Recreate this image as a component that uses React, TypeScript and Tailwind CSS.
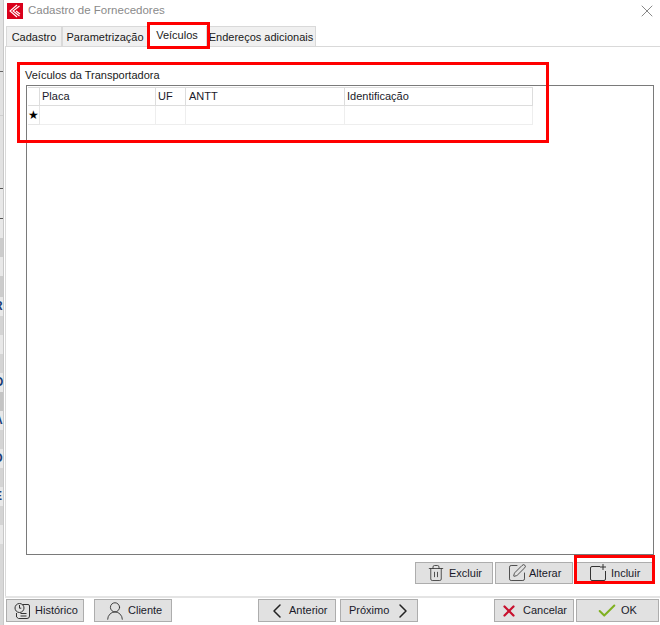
import type { ReactNode } from "react";
import { Check, ChevronLeft, ChevronRight, SquarePen, Trash2, UserRound, X } from "lucide-react";

const tabs = [
  { label: "Cadastro", width: "w-[56px]" },
  { label: "Parametrização", width: "w-[86px]" },
  { label: "Veículos", width: "w-[58px]" },
  { label: "Endereços adicionais", width: "w-[110px]" },
];

// background window that peeks out at the left of the dialog
const strip = [
  { h: "h-[71px]", bg: "bg-[#e2e2e2]", text: "" },
  { h: "h-[1px]", bg: "bg-[#666666]", text: "" },
  { h: "h-[43px]", bg: "bg-[#e2e2e2]", text: "" },
  { h: "h-[1px]", bg: "bg-[#cfcfcf]", text: "" },
  { h: "h-[72px]", bg: "bg-[#e2e2e2]", text: "" },
  { h: "h-[1px]", bg: "bg-[#555555]", text: "" },
  { h: "h-[29px]", bg: "bg-[#e8e8e8]", text: "" },
  { h: "h-[1px]", bg: "bg-[#555555]", text: "" },
  { h: "h-[19px]", bg: "bg-[#e8e8e8]", text: "" },
  { h: "h-[19px]", bg: "bg-[#cccccc]", text: "" },
  { h: "h-[19px]", bg: "bg-[#e8e8e8]", text: "" },
  { h: "h-[21px]", bg: "bg-[#cccccc]", text: "" },
  { h: "h-[19px]", bg: "bg-[#e8e8e8]", text: "R" },
  { h: "h-[19px]", bg: "bg-[#d4d4d4]", text: "" },
  { h: "h-[19px]", bg: "bg-[#e8e8e8]", text: "" },
  { h: "h-[19px]", bg: "bg-[#d4d4d4]", text: "" },
  { h: "h-[19px]", bg: "bg-[#e8e8e8]", text: "O" },
  { h: "h-[19px]", bg: "bg-[#c4c4c4]", text: "" },
  { h: "h-[19px]", bg: "bg-[#e8e8e8]", text: "A" },
  { h: "h-[19px]", bg: "bg-[#d4d4d4]", text: "" },
  { h: "h-[19px]", bg: "bg-[#e8e8e8]", text: "D" },
  { h: "h-[19px]", bg: "bg-[#d4d4d4]", text: "" },
  { h: "h-[19px]", bg: "bg-[#e8e8e8]", text: "E" },
  { h: "h-[19px]", bg: "bg-[#d4d4d4]", text: "" },
  { h: "h-[19px]", bg: "bg-[#e8e8e8]", text: "" },
  { h: "h-[100px]", bg: "bg-[#d8d8d8]", text: "" },
];

function Logo() {
  return (
    <svg width="16" height="16" viewBox="0 0 16 16" className="bg-[#d9001b]">
      <path d="M10 2 L3 8 L10 14 M12.5 3 L6 8 L12.5 13 M9 8 L13 11" fill="none" stroke="#fff" strokeWidth="1.1" />
    </svg>
  );
}

function HistoryIcon() {
  return (
    <svg width="18" height="18" viewBox="0 0 18 18" fill="none" stroke="#333" strokeWidth="1">
      <path d="M5 2.5h10a1.5 1.5 0 0 1 1.5 1.5v10a2.5 2.5 0 0 1-2.5 2.5H5.5L3.5 15V11" />
      <circle cx="6.5" cy="6" r="4.5" fill="#e1e1e1" />
      <path d="M6.5 3v3.2h1.8M7.5 11.5h6M7.5 14h6" />
    </svg>
  );
}

function NewIcon() {
  return (
    <svg width="18" height="18" viewBox="0 0 18 18" fill="none" stroke="#333" strokeWidth="1">
      <path d="M11 2.5H3A1.5 1.5 0 0 0 1.5 4v11A1.5 1.5 0 0 0 3 16.5h12a1.5 1.5 0 0 0 1.5-1.5V7" />
      <path d="M14 0v6M11 3h6" />
    </svg>
  );
}

function Btn({ className, children }: { className: string; children: ReactNode }) {
  return (
    <button className={`flex items-center overflow-hidden border border-[#adadad] bg-[#e1e1e1] text-[11px] whitespace-nowrap text-[#1a1a2a] ${className}`}>
      {children}
    </button>
  );
}

export default function App() {
  return (
    <div className="relative flex h-[625px] w-[660px] overflow-hidden bg-white font-['Liberation_Sans',sans-serif]">
      <div className="flex w-[5px] shrink-0 flex-col">
        {strip.map((s, i) => (
          <div key={i} className="flex shrink-0">
            <div className={`${s.h} ${s.bg} w-[3px] overflow-hidden text-[12px] leading-[19px] font-bold text-[#1c3f77]`}>
              {s.text && <span className="ml-[-6px] block">{s.text}</span>}
            </div>
            <div className={`${s.h} w-[1px] bg-[#c8c8c8]`}></div>
          </div>
        ))}
      </div>

      <div className="flex min-w-0 flex-1 flex-col">
        <div className="flex h-[20px] shrink-0 items-center pt-[1px] pl-[2px]">
          <Logo />
          <span className="ml-[5px] text-[11.5px] text-[#8a8a8a]">Cadastro de Fornecedores</span>
          <X size={20} strokeWidth={1.2} className="mr-[3px] ml-auto text-[#888888]" />
        </div>

        <div className="flex h-[26px] shrink-0 items-end pl-[1px]">
          {tabs.map((t) =>
            t.label === "Veículos" ? (
              <div key={t.label} className={`${t.width} flex h-[24px] items-center justify-center bg-white pt-[2px] text-[11px] whitespace-nowrap text-[#1a1a1a]`}>
                {t.label}
              </div>
            ) : (
              <div key={t.label} className={`${t.width} flex h-[20px] items-center justify-center border border-b-0 border-[#d9d9d9] bg-[#f0f0f0] pt-[1px] text-[11px] whitespace-nowrap text-[#1a1a1a]`}>
                {t.label}
              </div>
            ),
          )}
        </div>

        <div className="flex min-h-0 flex-1 flex-col border-t border-l border-[#d9d9d9] pr-[6px] pl-[20px]">
          <div className="ml-[-1px] h-[38px] shrink-0 pt-[20px] text-[11px] leading-[16px] text-[#1a1a1a]">Veículos da Transportadora</div>
          <div className="min-h-0 flex-1 border border-[#7a7a7a] pt-[1px] pl-[1px]">
            <table className="w-[505px] table-fixed border-separate border-spacing-0 text-left text-[11px] text-[#1a1a2a]">
              <colgroup>
                <col className="w-[12px]" />
                <col className="w-[116px]" />
                <col className="w-[30px]" />
                <col className="w-[159px]" />
                <col className="w-[188px]" />
              </colgroup>
              <thead>
                <tr className="h-[19px]">
                  <th className="border-t border-r border-b border-[#dddddd] font-normal"></th>
                  <th className="border-t border-r border-b border-[#dddddd] pl-[2px] font-normal">Placa</th>
                  <th className="border-t border-r border-b border-[#dddddd] pl-[2px] font-normal">UF</th>
                  <th className="border-t border-r border-b border-[#dddddd] pl-[3px] font-normal">ANTT</th>
                  <th className="border-t border-r border-b border-[#dddddd] pl-[2px] font-normal">Identificação</th>
                </tr>
              </thead>
              <tbody>
                <tr className="h-[19px]">
                  <td className="border-r border-b border-[#e6e6e6] text-[12px] leading-none text-black">★</td>
                  <td className="border-r border-b border-[#eeeeee]"></td>
                  <td className="border-r border-b border-[#eeeeee]"></td>
                  <td className="border-r border-b border-[#eeeeee]"></td>
                  <td className="border-r border-b border-[#eeeeee]"></td>
                </tr>
              </tbody>
            </table>
          </div>
          <div className="mr-[1px] flex h-[41px] shrink-0 justify-end gap-[2px] pt-[7px]">
            <Btn className="h-[22px] w-[78px] gap-[4px] pl-[11px]">
              <Trash2 size={18} strokeWidth={1.1} className="text-[#333333]" />
              Excluir
            </Btn>
            <Btn className="h-[22px] w-[78px] gap-[2px] pl-[11px]">
              <SquarePen size={20} strokeWidth={1} className="text-[#333333]" />
              Alterar
            </Btn>
            <Btn className="h-[22px] w-[78px] gap-[4px] pl-[13px]">
              <NewIcon />
              Incluir
            </Btn>
          </div>
        </div>

        <div className="flex h-[29px] shrink-0 items-start border-t-2 border-[#e4e4e4] pt-[1px] pl-[1px]">
          <Btn className="h-[23px] w-[78px] gap-[4px] pl-[6px]">
            <HistoryIcon />
            Histórico
          </Btn>
          <Btn className="ml-[10px] h-[23px] w-[78px] gap-[2px] pl-[9px]">
            <UserRound size={22} strokeWidth={1} className="text-[#333333]" />
            Cliente
          </Btn>
          <Btn className="ml-[86px] h-[23px] w-[78px] pl-[6px]">
            <ChevronLeft size={24} strokeWidth={1.5} className="text-[#222222]" />
            Anterior
          </Btn>
          <Btn className="ml-[4px] h-[23px] w-[78px] gap-[2px] pl-[8px]">
            Próximo
            <ChevronRight size={24} strokeWidth={1.5} className="text-[#222222]" />
          </Btn>
          <Btn className="ml-[76px] h-[23px] w-[80px] gap-[5px] pl-[5px] text-[11.5px]">
            <X size={18} strokeWidth={3} className="text-[#c8102e]" />
            Cancelar
          </Btn>
          <Btn className="ml-[2px] h-[23px] w-[83px] gap-[3px] pl-[19px] text-[11.5px]">
            <Check size={22} strokeWidth={2.2} className="text-[#7fb020]" />
            OK
          </Btn>
        </div>
      </div>

      <div className="absolute top-[22px] left-[147px] h-[27px] w-[63px] border-[3px] border-[#ff0000]"></div>
      <div className="absolute top-[62px] left-[17px] h-[81px] w-[532px] border-[3px] border-[#ff0000]"></div>
      <div className="absolute top-[555px] left-[574px] h-[29px] w-[81px] border-[3px] border-[#ff0000]"></div>
    </div>
  );
}
